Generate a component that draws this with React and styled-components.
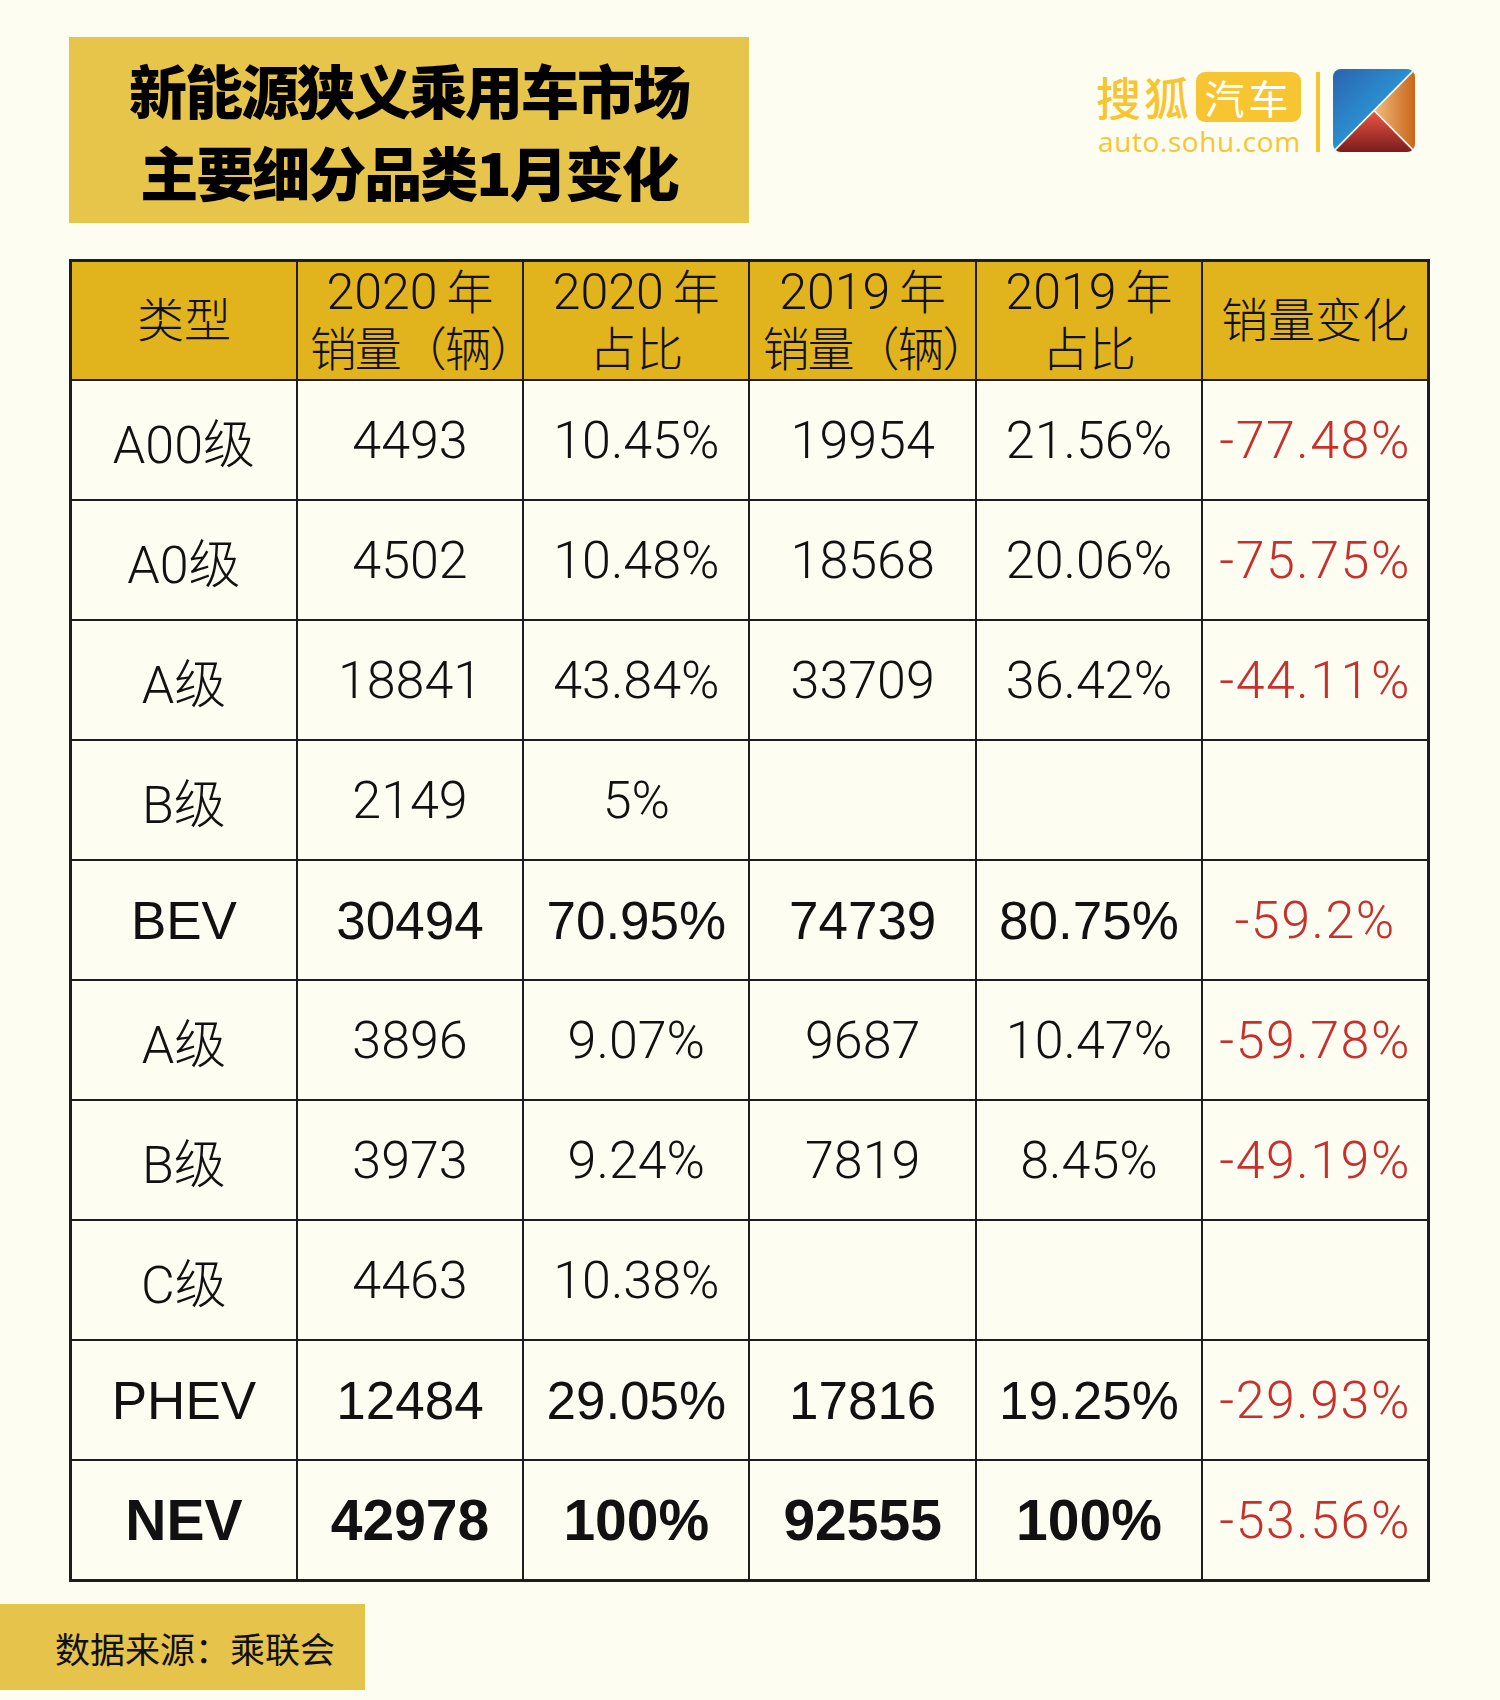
import React from "react";
import styled, { createGlobalStyle } from "styled-components";

const GlobalStyle = createGlobalStyle`
  html, body {
    margin: 0;
    padding: 0;
    background: #fdfdf2;
  }
  body {
    font-family: "Noto Sans CJK SC", sans-serif;
  }
`;

// each header cell: optional year line + label line
const header = [
  { label: "类型" },
  { year: "2020", label: "销量（辆）" },
  { year: "2020", label: "占比" },
  { year: "2019", label: "销量（辆）" },
  { year: "2019", label: "占比" },
  { label: "销量变化" },
];

const rows = [
  { tone: "light", cells: ["A00级", "4493", "10.45%", "19954", "21.56%", "-77.48%"] },
  { tone: "light", cells: ["A0级", "4502", "10.48%", "18568", "20.06%", "-75.75%"] },
  { tone: "light", cells: ["A级", "18841", "43.84%", "33709", "36.42%", "-44.11%"] },
  { tone: "light", cells: ["B级", "2149", "5%", "", "", ""] },
  { tone: "mid", cells: ["BEV", "30494", "70.95%", "74739", "80.75%", "-59.2%"] },
  { tone: "light", cells: ["A级", "3896", "9.07%", "9687", "10.47%", "-59.78%"] },
  { tone: "light", cells: ["B级", "3973", "9.24%", "7819", "8.45%", "-49.19%"] },
  { tone: "light", cells: ["C级", "4463", "10.38%", "", "", ""] },
  { tone: "mid", cells: ["PHEV", "12484", "29.05%", "17816", "19.25%", "-29.93%"] },
  { tone: "bold", cells: ["NEV", "42978", "100%", "92555", "100%", "-53.56%"] },
];

const Page = styled.div`
  width: 1500px;
  height: 1700px;
  box-sizing: border-box;
  padding-top: 37px;
  display: flex;
  flex-direction: column;
`;

const Top = styled.div`
  display: flex;
  justify-content: space-between;
  align-items: flex-start;
  padding: 0 85px 0 69px;
`;

const TitleBox = styled.div`
  width: 680px;
  height: 186px;
  background: #e7c44a;
  display: flex;
  align-items: center;
  justify-content: center;
  h1 {
    margin: 0;
    font-family: "Noto Sans CJK SC", sans-serif;
    font-weight: 900;
    font-size: 58px;
    line-height: 82px;
    letter-spacing: -2px;
    color: #000;
    text-align: center;
  }
`;

const Logo = styled.div`
  margin-top: 32px;
  display: flex;
  align-items: flex-start;
`;

const Brand = styled.div`
  margin-top: 3px;
  display: flex;
  flex-direction: column;
  align-items: flex-start;
`;

const BrandRow = styled.div`
  display: flex;
  align-items: center;
  height: 50px;
`;

const BrandName = styled.span`
  font-family: "Noto Sans CJK SC", sans-serif;
  font-weight: 500;
  font-size: 45px;
  letter-spacing: 3px;
  color: #f7c531;
  line-height: 48px;
  margin-right: 4px;
`;

const Badge = styled.span`
  background: #f7c531;
  color: #fff;
  border-radius: 9px;
  width: 105px;
  height: 50px;
  display: flex;
  align-items: center;
  justify-content: center;
  font-family: "Noto Sans CJK SC", sans-serif;
  font-size: 40px;
  letter-spacing: 4px;
  line-height: 1;
`;

const Domain = styled.span`
  margin: 2px 0 0 2px;
  font-family: "Open Sans", sans-serif;
  font-size: 28px;
  letter-spacing: 0.6px;
  color: #f7c531;
  line-height: 34px;
`;

const Bar = styled.div`
  width: 4px;
  height: 80px;
  margin: 3px 13px 0 15px;
  background: #f7c531;
`;

const Table = styled.table`
  margin: 36px 0 0 69px;
  width: 1361px;
  table-layout: fixed;
  border-collapse: collapse;
  border: 3px solid #1e1e1e;
`;

const Th = styled.th`
  background: #e1b41e;
  border: 2px solid #1e1e1e;
  height: 117px;
  padding: 0;
  font-family: "Roboto", "Noto Sans CJK SC", sans-serif;
  font-weight: 300;
  font-size: 47px;
  line-height: 57px;
  color: #111;
  white-space: nowrap;
`;

const HeadLine = styled.div`
  letter-spacing: ${(p) => (p.$long ? "-2px" : "0")};
  padding-left: ${(p) => (p.$long ? "12px" : "0")};
`;

const Year = styled.span`
  font-size: 50px;
  margin-right: 9px;
`;

const toneFont = {
  light: { family: `"Roboto", "Noto Sans CJK SC", sans-serif`, weight: 300, size: "52px" },
  mid: { family: `"Liberation Sans", "Noto Sans CJK SC", sans-serif`, weight: 400, size: "53px" },
  bold: { family: `"Liberation Sans", "Noto Sans CJK SC", sans-serif`, weight: 700, size: "57px" },
};

const Td = styled.td`
  border: 2px solid #1e1e1e;
  height: 118px;
  padding: 0;
  text-align: center;
  white-space: nowrap;
  font-family: ${(p) => toneFont[p.$tone].family};
  font-weight: ${(p) => toneFont[p.$tone].weight};
  font-size: ${(p) => toneFont[p.$tone].size};
  color: #111;
  &.change {
    font-family: "Roboto", sans-serif;
    font-weight: 300;
    font-size: 52px;
    color: #c8302e;
    letter-spacing: 1.5px;
  }
`;

const Footer = styled.div`
  margin-top: 22px;
  width: 365px;
  height: 86px;
  background: #e6c34a;
  display: flex;
  align-items: center;
  padding-left: 55px;
  box-sizing: border-box;
  font-family: "Noto Sans CJK SC", sans-serif;
  font-size: 35px;
  color: #111;
`;

function SohuIcon() {
  return (
    <svg width="82" height="83" viewBox="0 0 82 83">
      <defs>
        <clipPath id="round">
          <rect x="0" y="0" width="82" height="83" rx="8" />
        </clipPath>
        <linearGradient id="blue" x1="0" y1="0" x2="1" y2="1">
          <stop offset="0" stopColor="#2a64b0" />
          <stop offset="0.45" stopColor="#2b8bcc" />
          <stop offset="1" stopColor="#3fb8bc" />
        </linearGradient>
        <linearGradient id="orange" x1="0" y1="0" x2="1" y2="0">
          <stop offset="0" stopColor="#f3bb7c" />
          <stop offset="1" stopColor="#c8661a" />
        </linearGradient>
        <linearGradient id="red" x1="0" y1="0" x2="0" y2="1">
          <stop offset="0" stopColor="#ee5640" />
          <stop offset="1" stopColor="#7a1c1e" />
        </linearGradient>
      </defs>
      <g clipPath="url(#round)">
        <polygon points="0,0 82,0 0,83" fill="url(#blue)" />
        <polygon points="82,0 82,83 41,41.5" fill="url(#orange)" />
        <polygon points="0,83 41,41.5 82,83" fill="url(#red)" />
        <line x1="0" y1="83" x2="82" y2="0" stroke="#fff" strokeWidth="1.6" />
        <line x1="41" y1="41.5" x2="82" y2="83" stroke="#fff" strokeWidth="1.6" />
      </g>
    </svg>
  );
}

export default function App() {
  return (
    <Page>
      <GlobalStyle />
      <Top>
        <TitleBox>
          <h1>
            新能源狭义乘用车市场
            <br />
            主要细分品类1月变化
          </h1>
        </TitleBox>
        <Logo>
          <Brand>
            <BrandRow>
              <BrandName>搜狐</BrandName>
              <Badge>汽车</Badge>
            </BrandRow>
            <Domain>auto.sohu.com</Domain>
          </Brand>
          <Bar />
          <SohuIcon />
        </Logo>
      </Top>
      <Table>
        <thead>
          <tr>
            {header.map((h, i) => (
              <Th key={i}>
                {h.year && (
                  <HeadLine>
                    <Year>{h.year}</Year>年
                  </HeadLine>
                )}
                <HeadLine $long={h.label.length > 2 && !!h.year}>{h.label}</HeadLine>
              </Th>
            ))}
          </tr>
        </thead>
        <tbody>
          {rows.map((row, i) => (
            <tr key={i}>
              {row.cells.map((c, j) => (
                <Td key={j} $tone={row.tone} className={j === 5 ? "change" : undefined}>
                  {c}
                </Td>
              ))}
            </tr>
          ))}
        </tbody>
      </Table>
      <Footer>数据来源：乘联会</Footer>
    </Page>
  );
}
